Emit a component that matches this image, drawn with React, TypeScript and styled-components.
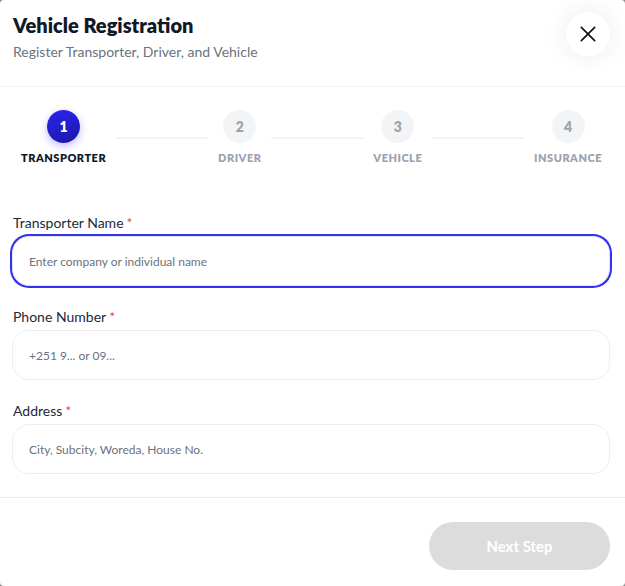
import React from "react";
import styled, { createGlobalStyle } from "styled-components";

const Global = createGlobalStyle`
  html, body { margin: 0; padding: 0; background: #8a8a8a; }
  body { font-family: "Lato", "Noto Sans", sans-serif; }
  * { box-sizing: border-box; }
`;

const Modal = styled.div`
  width: 625px;
  height: 586px;
  background: #ffffff;
  border-radius: 4px;
  display: flex;
  flex-direction: column;
  overflow: hidden;
`;

const Header = styled.header`
  height: 87px;
  border-bottom: 1px solid #f3f4f6;
  display: flex;
  align-items: flex-start;
  justify-content: space-between;
  padding: 13px 15px 0 13px;
`;

const TitleBlock = styled.div`
  display: flex;
  flex-direction: column;
  gap: 6px;
`;

const Title = styled.h1`
  margin: 0;
  font-size: 20px;
  line-height: 24px;
  font-weight: 800;
  color: #111827;
`;

const Subtitle = styled.p`
  margin: 0;
  font-size: 14px;
  line-height: 18px;
  color: #6b7280;
`;

const CloseButton = styled.button`
  width: 44px;
  height: 44px;
  margin-top: -1px;
  border-radius: 50%;
  border: none;
  background: #ffffff;
  box-shadow: 0 0 18px 8px rgba(0, 0, 0, 0.04);
  display: flex;
  align-items: center;
  justify-content: center;
  padding: 0;
  cursor: pointer;
`;

const Stepper = styled.div`
  display: flex;
  align-items: flex-start;
  padding: 23px 23px 0 21px;
  height: 127px;
`;

const Step = styled.div`
  display: flex;
  flex-direction: column;
  align-items: center;
  gap: 8px;
`;

const Circle = styled.div<{ $active?: boolean }>`
  width: 33px;
  height: 33px;
  border-radius: 50%;
  display: flex;
  align-items: center;
  justify-content: center;
  font-size: 14px;
  font-weight: 800;
  color: ${(p) => (p.$active ? "#ffffff" : "#9ca3af")};
  background: ${(p) =>
    p.$active ? "linear-gradient(160deg, #2d24f0 0%, #1a17a8 100%)" : "#f3f4f6"};
  box-shadow: ${(p) => (p.$active ? "0 3px 8px rgba(45, 36, 240, 0.3)" : "none")};
`;

const StepLabel = styled.span<{ $active?: boolean }>`
  font-size: 11px;
  line-height: 14px;
  font-weight: 800;
  letter-spacing: 0.5px;
  text-transform: uppercase;
  color: ${(p) => (p.$active ? "#111827" : "#9ca3af")};
`;

const Connector = styled.div`
  flex: 1;
  height: 2px;
  background: #f3f4f6;
  margin: 27px 10px 0;
`;

const Form = styled.div`
  flex: 1;
  display: flex;
  flex-direction: column;
  gap: 22px;
  padding: 0 15px 0 12px;
`;

const Field = styled.div`
  display: flex;
  flex-direction: column;
  gap: 4px;
`;

const Label = styled.label`
  font-size: 14px;
  line-height: 18px;
  color: #1f2937;
  padding-left: 1px;
`;

const Req = styled.span`
  color: #ef4444;
  margin-left: 3px;
`;

const Input = styled.input<{ $focused?: boolean }>`
  height: 50px;
  width: 100%;
  border-radius: 17px;
  border: 1px solid ${(p) => (p.$focused ? "#e4e4f2" : "#eeeeee")};
  box-shadow: ${(p) => (p.$focused ? "0 0 0 2px #3131f2" : "none")};
  outline: none;
  padding: 0 16px;
  font-family: inherit;
  font-size: 12px;
  color: #111827;
  background: #ffffff;
  &::placeholder { color: #6b7280; }
`;

const Footer = styled.footer`
  height: 89px;
  border-top: 1px solid #eeeeee;
  display: flex;
  align-items: flex-start;
  justify-content: flex-end;
  padding: 24px 15px 0 0;
`;

const NextButton = styled.button`
  width: 181px;
  height: 48px;
  border-radius: 24px;
  border: none;
  background: #dcdcdc;
  color: #ffffff;
  font-family: inherit;
  font-size: 15px;
  font-weight: 700;
`;

const steps = ["Transporter", "Driver", "Vehicle", "Insurance"];

export default function App() {
  return (
    <>
      <Global />
      <Modal>
        <Header>
          <TitleBlock>
            <Title>Vehicle Registration</Title>
            <Subtitle>Register Transporter, Driver, and Vehicle</Subtitle>
          </TitleBlock>
          <CloseButton aria-label="Close">
            <svg width="20" height="20" viewBox="0 0 24 24" fill="none" stroke="#111" strokeWidth="2" strokeLinecap="round">
              <path d="M4 4L20 20M20 4L4 20" />
            </svg>
          </CloseButton>
        </Header>
        <Stepper>
          {steps.map((s, i) => (
            <React.Fragment key={s}>
              {i > 0 && <Connector />}
              <Step>
                <Circle $active={i === 0}>{i + 1}</Circle>
                <StepLabel $active={i === 0}>{s}</StepLabel>
              </Step>
            </React.Fragment>
          ))}
        </Stepper>
        <Form>
          <Field>
            <Label>Transporter Name<Req>*</Req></Label>
            <Input $focused placeholder="Enter company or individual name" />
          </Field>
          <Field>
            <Label>Phone Number<Req>*</Req></Label>
            <Input placeholder="+251 9... or 09..." />
          </Field>
          <Field>
            <Label>Address<Req>*</Req></Label>
            <Input placeholder="City, Subcity, Woreda, House No." />
          </Field>
        </Form>
        <Footer>
          <NextButton>Next Step</NextButton>
        </Footer>
      </Modal>
    </>
  );
}
